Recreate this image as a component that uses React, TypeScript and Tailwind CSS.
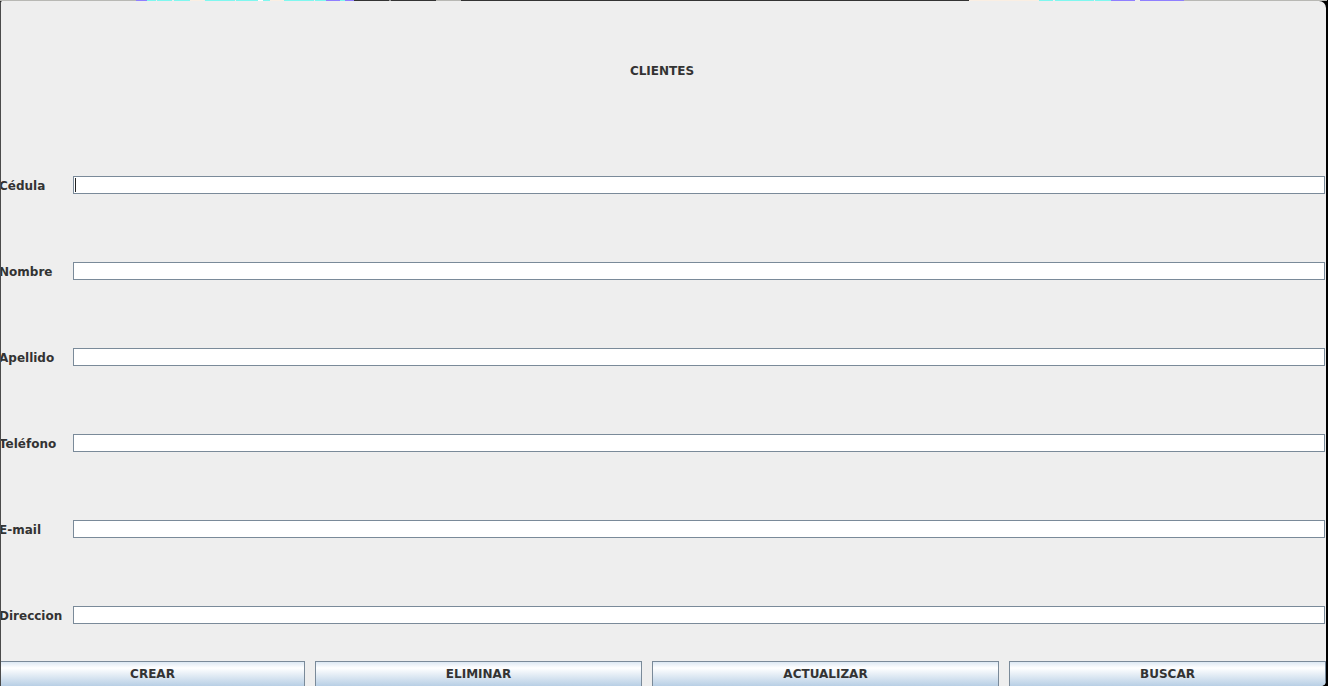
const STRIP = [
  { w: 136, c: 'bg-[#b8b8b4]' },
  { w: 11, c: 'bg-[#8f7fff]' },
  { w: 9, c: 'bg-[#7ff7ef]' },
  { w: 1, c: 'bg-[#eeeeee]' },
  { w: 15, c: 'bg-[#7ff7ef]' },
  { w: 2, c: 'bg-[#eeeeee]' },
  { w: 16, c: 'bg-[#7ff7ef]' },
  { w: 14, c: 'bg-[#faeee2]' },
  { w: 1, c: 'bg-[#eeeeee]' },
  { w: 30, c: 'bg-[#7ff7ef]' },
  { w: 1, c: 'bg-[#eeeeee]' },
  { w: 22, c: 'bg-[#7ff7ef]' },
  { w: 5, c: 'bg-[#ffffff]' },
  { w: 7, c: 'bg-[#7ff7ef]' },
  { w: 14, c: 'bg-[#faeee2]' },
  { w: 30, c: 'bg-[#7ff7ef]' },
  { w: 1, c: 'bg-[#eeeeee]' },
  { w: 11, c: 'bg-[#7ff7ef]' },
  { w: 14, c: 'bg-[#8f7fff]' },
  { w: 5, c: 'bg-[#7ff7ef]' },
  { w: 9, c: 'bg-[#8f7fff]' },
  { w: 35, c: 'bg-[#333333]' },
  { w: 2, c: 'bg-[#9a9a9a]' },
  { w: 45, c: 'bg-[#333333]' },
  { w: 25, c: 'bg-[#b8b8b4]' },
  { w: 508, c: 'bg-[#333333]' },
  { w: 70, c: 'bg-[#faeee2]' },
  { w: 14, c: 'bg-[#7ff7ef]' },
  { w: 2, c: 'bg-[#eeeeee]' },
  { w: 39, c: 'bg-[#7ff7ef]' },
  { w: 1, c: 'bg-[#eeeeee]' },
  { w: 16, c: 'bg-[#7ff7ef]' },
  { w: 24, c: 'bg-[#8f7fff]' },
  { w: 5, c: 'bg-[#eeeeee]' },
  { w: 44, c: 'bg-[#8f7fff]' },
  { w: 143, c: 'bg-[#b8b8b4]' },
];

const FIELDS = ['Cédula', 'Nombre', 'Apellido', 'Teléfono', 'E-mail', 'Direccion'];

const BUTTONS = [
  { label: 'CREAR', w: 'w-[305px]' },
  { label: 'ELIMINAR', w: 'w-[327px]' },
  { label: 'ACTUALIZAR', w: 'w-[347px]' },
  { label: 'BUSCAR', w: 'w-[317px]' },
];

export default function App() {
  return (
    <div
      className="w-[1328px] h-[686px] bg-black flex flex-col overflow-hidden text-[#333333]"
      style={{ fontFamily: '"DejaVu Sans", Verdana, sans-serif' }}
    >
      {/* desktop strip behind the window */}
      <div className="flex h-px flex-shrink-0">
        {STRIP.map((s, i) => (
          <div key={i} className={`h-px flex-shrink-0 ${s.c}`} style={{ width: s.w }} />
        ))}
      </div>

      {/* Window */}
      <div className="w-[1326px] flex-1 flex flex-col bg-[#eeeeee] border-l border-[#4a4a4a] rounded-tl-[2px] rounded-tr-[7px] rounded-br-[5px] overflow-hidden">
        {/* Title */}
        <div className="h-[141px] flex-shrink-0 flex justify-center pt-[62px]">
          <span className="text-[12px] leading-[16px] font-bold -ml-[3px]">CLIENTES</span>
        </div>

        {/* Form rows */}
        <div className="flex flex-col">
          {FIELDS.map((label, i) => (
            <div key={label} className="h-[86px] flex items-center">
              <div className="w-[72px] flex-shrink-0 -ml-[2px] pt-[2px] text-[12px] leading-[16px] font-bold whitespace-nowrap">
                {label}
              </div>
              <div className="ml-[2px] mr-px flex-1 h-[18px] bg-white border border-[#7a8a99] flex items-center">
                {i === 0 && <div className="w-px h-[14px] bg-[#222222] ml-px" />}
              </div>
            </div>
          ))}
        </div>

        {/* Buttons */}
        <div className="flex gap-[10px] mt-[3px] -ml-px">
          {BUTTONS.map((b) => (
            <button
              key={b.label}
              className={`${b.w} h-[26px] flex-shrink-0 border border-[#7a8a99] bg-linear-to-b from-[#dde8f3] via-white via-[25%] to-[#b8cfe5] text-[12px] leading-[16px] font-bold text-[#333333] flex items-start justify-center pt-[4px]`}
            >
              {b.label}
            </button>
          ))}
        </div>
      </div>
    </div>
  );
}
